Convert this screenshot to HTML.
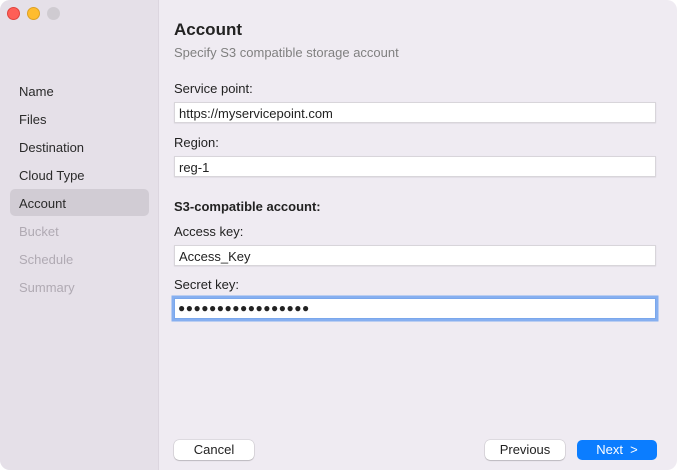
<!DOCTYPE html>
<html><head><style>
*{margin:0;padding:0;box-sizing:border-box}
body{width:677px;height:470px;background:#fff;font-family:"Liberation Sans",sans-serif;font-size:13px;color:#222;overflow:hidden}
.win{position:absolute;left:0;top:0;width:677px;height:470px;border-radius:10px;overflow:hidden;background:#efebf2}
.side{position:absolute;left:0;top:0;width:159px;height:470px;background:#e5e0e8;border-right:1px solid #dcd6df}
.dot{position:absolute;top:7px;width:13px;height:13px;border-radius:50%}
.item{position:absolute;left:19px;font-size:13px;color:#2a2a2a}
.dis{color:#b0aab3}
.sel{position:absolute;left:10px;top:189px;width:139px;height:27px;background:#d1ccd4;border-radius:5px}
.t{position:absolute;left:174px}
.f{position:absolute;left:174px;width:482px;height:21px;background:#fff;border:1px solid #d8d5da;box-shadow:0 0.5px 1px rgba(0,0,0,.1);padding:3px 4px;font-size:13px;color:#222}
.btn{position:absolute;top:440px;width:80px;height:20px;background:#fff;border-radius:5px;box-shadow:0 0 0 0.5px rgba(0,0,0,.15),0 1px 1px rgba(0,0,0,.15);text-align:center;line-height:20px;font-size:13px;color:#222}
</style></head><body>
<div class="win">
<div class="side">
<div class="dot" style="left:7px;background:#fe5f57;border:0.5px solid #e0443e"></div>
<div class="dot" style="left:27px;background:#febc2e;border:0.5px solid #dea123"></div>
<div class="dot" style="left:47px;background:#cfcbd1"></div>
<div class="sel"></div>
<div class="item" style="top:84px">Name</div>
<div class="item" style="top:112px">Files</div>
<div class="item" style="top:140px">Destination</div>
<div class="item" style="top:168px">Cloud Type</div>
<div class="item" style="top:196px">Account</div>
<div class="item dis" style="top:224px">Bucket</div>
<div class="item dis" style="top:252px">Schedule</div>
<div class="item dis" style="top:280px">Summary</div>
</div>
<div class="t" style="top:20px;font-size:17px;font-weight:bold;color:#222">Account</div>
<div class="t" style="top:45px;color:#808080">Specify S3 compatible storage account</div>
<div class="t" style="top:81px">Service point:</div>
<div class="f" style="top:102px">https://myservicepoint.com</div>
<div class="t" style="top:135px">Region:</div>
<div class="f" style="top:156px">reg-1</div>
<div class="t" style="top:199px;font-weight:bold">S3-compatible account:</div>
<div class="t" style="top:224px">Access key:</div>
<div class="f" style="top:245px">Access_Key</div>
<div class="t" style="top:277px">Secret key:</div>
<div class="f" style="top:298px;border:1px solid #7aa7ec;box-shadow:0 0 0 2.5px #86aff0;font-size:12px;letter-spacing:0.5px;line-height:14px;padding-top:2px;padding-left:3px">●●●●●●●●●●●●●●●●●</div>
<div class="btn" style="left:174px">Cancel</div>
<div class="btn" style="left:485px">Previous</div>
<div class="btn" style="left:577px;background:#0b7dff;color:#fff;box-shadow:none">Next &nbsp;&gt;</div>
</div>
</body></html>
